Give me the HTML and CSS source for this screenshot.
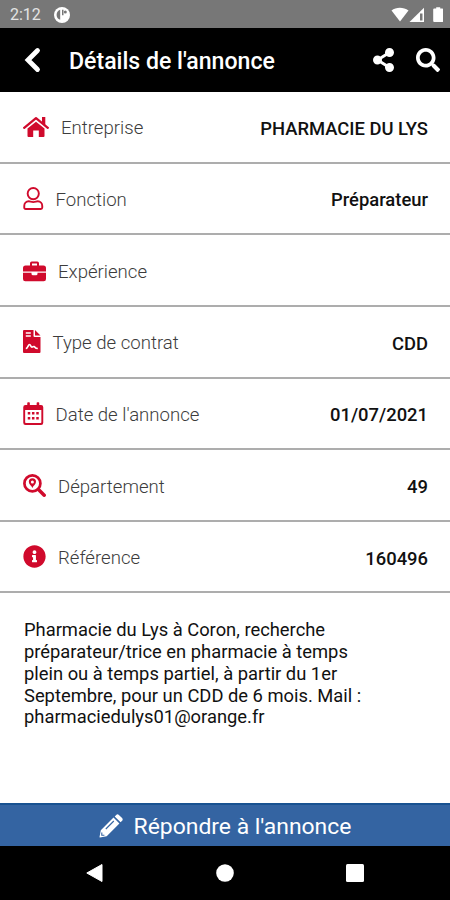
FILE: index.html
```html
<!DOCTYPE html>
<html lang="fr">
<head>
    <meta charset="UTF-8">
    <meta name="viewport" content="width=device-width, initial-scale=1.0">
    <title>Détails de l'annonce</title>
    <link rel="stylesheet" href="styles.css">
</head>
<body>
    <div class="status-bar">
        <span class="clock">2:12</span>
        <svg class="app-icon" viewBox="0 0 16 16">
            <circle cx="8" cy="8" r="8" fill="#fff"/>
            <path d="M6.200 2.800v10C3.800 12 2.600 10.300 2.600 8s1.200-4.300 3.600-5.200z" fill="#777"/>
            <path d="M8 2.800h1.500v5.500H8z" fill="#777"/>
            <circle cx="11.300" cy="5" r="1.500" fill="#777"/>
        </svg>
        <svg class="signals" viewBox="0 0 52 16">
            <path d="M.5 3.600C5 -.2 12.500 -.2 17.500 3.600L9 14.500z" fill="#fff"/>
            <path d="M33 .8V15H18.500z" fill="#fff"/>
            <path d="M29 6.500h2.500v7H29z" fill="#777"/>
            <path d="M43.200 1.500h2V.2h4v1.300h2q1 0 1 1V14q0 1-1 1h-8q-1 0-1-1V2.500q0-1 1-1z" fill="#fff"/>
        </svg>
    </div>

    <div class="header">
        <svg class="back" viewBox="0 0 17 26">
            <path d="M13.500 3.500L4 13l9.500 9.500" fill="none" stroke="#fff" stroke-width="4.800" stroke-linecap="round" stroke-linejoin="miter"/>
        </svg>
        <h1>Détails de l'annonce</h1>
        <svg class="share" viewBox="0 0 448 512">
            <path fill="#fff" d="M352 320c-22.608 0-43.387 7.819-59.790 20.895l-102.486-64.054a96.551 96.551 0 0 0 0-41.683l102.486-64.054C308.613 184.181 329.392 192 352 192c53.019 0 96-42.981 96-96S405.019 0 352 0s-96 42.981-96 96c0 7.158.790 14.130 2.276 20.841L155.790 180.895C139.387 167.819 118.608 160 96 160c-53.019 0-96 42.981-96 96s42.981 96 96 96c22.608 0 43.387-7.819 59.790-20.895l102.486 64.054A96.301 96.301 0 0 0 256 416c0 53.019 42.981 96 96 96s96-42.981 96-96-42.981-96-96-96z"/>
        </svg>
        <svg class="search" viewBox="0 0 512 512">
            <path fill="#fff" d="M505 442.700L405.300 343c-4.500-4.500-10.600-7-17-7H372c27.600-35.300 44-79.700 44-128C416 93.100 322.900 0 208 0S0 93.100 0 208s93.100 208 208 208c48.300 0 92.700-16.400 128-44v16.300c0 6.400 2.500 12.500 7 17l99.700 99.700c9.400 9.400 24.600 9.400 33.900 0l28.300-28.300c9.400-9.400 9.400-24.600.1-34zM208 336c-70.700 0-128-57.200-128-128 0-70.700 57.200-128 128-128 70.700 0 128 57.200 128 128 0 70.700-57.200 128-128 128z"/>
        </svg>
    </div>

    <div class="row">
        <svg class="icon home" viewBox="0 0 26 23">
            <path d="M1.200 12.800L13 3.200l11.800 9.600" fill="none" stroke="#d00a2c" stroke-width="2.300" stroke-linecap="round" stroke-linejoin="round"/>
            <path d="M19 2h3.300v8L19 7.200zM4.500 13.600L13 6.700l8.500 6.900V21q0 1-1 1h-4.700v-6.500h-5.600V22H5.500q-1 0-1-1z"/>
        </svg>
        <span class="label">Entreprise</span>
        <span class="value">PHARMACIE DU LYS</span>
    </div>
    <div class="row">
        <svg class="icon narrow" viewBox="0 0 20 23">
            <g fill="none" stroke="#d00a2c" stroke-width="1.900">
                <circle cx="10" cy="6.600" r="5.600"/>
                <path d="M5.500 14.300c1.500 0 2.400.8 4.500.8s3-.8 4.500-.8c2.600 0 4.500 2 4.500 4.600v1.600q0 1.500-1.500 1.500h-15Q1 22 1 20.500v-1.600c0-2.600 1.900-4.600 4.500-4.600z"/>
            </g>
        </svg>
        <span class="label">Fonction</span>
        <span class="value">Préparateur</span>
    </div>
    <div class="row">
        <svg class="icon" viewBox="0 0 23 23">
            <path d="M7 6.500V4.200q0-1.700 1.700-1.700h5.600q1.700 0 1.700 1.700v2.300h4.500q2.500 0 2.500 2.500v3.500H0V9q0-2.500 2.500-2.500zm2 0h5V4.500H9zM0 13.700h8.500v1q0 1.500 1.500 1.500h3q1.500 0 1.500-1.500v-1H23V20q0 2.300-2.300 2.300H2.300Q0 22.300 0 20z"/>
        </svg>
        <span class="label">Expérience</span>
        <span class="value"></span>
    </div>
    <div class="row">
        <svg class="icon contract" viewBox="0 0 17.500 23">
            <path d="M1 0h9.500v6q0 1.100 1.100 1.100h5.900V22q0 1-1 1H1q-1 0-1-1V1q0-1 1-1zM12 0l5.500 5.500H12z"/>
            <path d="M2.800 3h5M2.800 6h5" stroke="#fff" stroke-width="1.400"/>
            <path d="M2.800 18.500c2.200 0 2.300-4 3.700-4 1.200 0 1.200 2.600 2.400 2.600s1.200-.8 2.200-.6.800 2 3.700 2" fill="none" stroke="#fff" stroke-width="1.700"/>
        </svg>
        <span class="label">Type de contrat</span>
        <span class="value">CDD</span>
    </div>
    <div class="row">
        <svg class="icon narrow" viewBox="0 0 20 23">
            <path d="M4 3V1q0-.8.8-.8h1q.8 0 .8.800v2h6.800V1q0-.8.800-.8h1q.8 0 .8.800v2h1.800Q20 3 20 5.200v15.600q0 2.200-2.200 2.200H2.200Q0 23 0 20.800V5.200Q0 3 2.200 3zM1.900 8v12.300q0 .8.800.8h14.600q.8 0 .8-.8V8z"/>
            <path d="M4.500 10h2.500v2.500H4.500zm4.200 0h2.500v2.500H8.700zm4.300 0h2.500v2.500H13zM4.500 15h2.500v2.500H4.500zm4.200 0h2.500v2.500H8.700zm4.300 0h2.500v2.500H13z"/>
        </svg>
        <span class="label">Date de l'annonce</span>
        <span class="value">01/07/2021</span>
    </div>
    <div class="row">
        <svg class="icon" viewBox="0 0 23 23">
            <circle cx="9.400" cy="9.400" r="8" fill="none" stroke="#d00a2c" stroke-width="2.700"/>
            <path d="M15.500 15.500l5.700 5.700" stroke="#d00a2c" stroke-width="3.500" stroke-linecap="round"/>
            <path d="M9.400 4.200a3.600 3.600 0 0 1 3.600 3.600c0 2.500-2.600 3.800-3.600 6.200-1-2.400-3.600-3.700-3.600-6.200a3.600 3.600 0 0 1 3.600-3.600z"/>
            <circle cx="9.400" cy="7.900" r="1.500" fill="#fff"/>
        </svg>
        <span class="label">Département</span>
        <span class="value">49</span>
    </div>
    <div class="row">
        <svg class="icon" viewBox="0 0 512 512">
            <path d="M256 8C119.043 8 8 119.083 8 256c0 136.997 111.043 248 248 248s248-111.003 248-248C504 119.083 392.957 8 256 8zm0 110c23.196 0 42 18.804 42 42s-18.804 42-42 42-42-18.804-42-42 18.804-42 42-42zm56 254c0 6.627-5.373 12-12 12h-88c-6.627 0-12-5.373-12-12v-24c0-6.627 5.373-12 12-12h12v-64h-12c-6.627 0-12-5.373-12-12v-24c0-6.627 5.373-12 12-12h64c6.627 0 12 5.373 12 12v100h12c6.627 0 12 5.373 12 12v24z"/>
        </svg>
        <span class="label">Référence</span>
        <span class="value">160496</span>
    </div>

    <p class="description">
        Pharmacie du Lys à Coron, recherche<br>
        préparateur/trice en pharmacie à temps<br>
        plein ou à temps partiel, à partir du 1er<br>
        Septembre, pour un CDD de 6 mois. Mail :<br>
        pharmaciedulys01@orange.fr
    </p>

    <div class="reply">
        <svg class="pencil" viewBox="0 0 24 24">
            <path fill="#fff" d="M1.800 16.300L14.500 3.600l5.900 5.900L7.700 22.200.9 23.400q-.5 0-.4-.5zM15.700 2.400l1.500-1.500q1.300-1.200 2.700 0l3.200 3.200q1.200 1.400 0 2.700l-1.500 1.500z"/>
            <path d="M6.800 15l8-8M2.800 18.500v2.700h2.600" fill="none" stroke="#3464a2" stroke-width="1.100"/>
        </svg>
        <span>Répondre à l'annonce</span>
    </div>

    <div class="nav-bar">
        <svg viewBox="0 0 20 20"><path d="M1.800 10L17 1.500v17z" fill="#fff" stroke="#fff" stroke-linejoin="round"/></svg>
        <svg viewBox="0 0 20 20"><circle cx="10" cy="10" r="8.800" fill="#fff"/></svg>
        <svg viewBox="0 0 20 20"><rect x="1" y="1" width="18" height="18" rx="1.500" fill="#fff"/></svg>
    </div>
</body>
</html>
```

FILE: styles.css
```css
* {
    box-sizing: border-box;
}

body {
    display: flex;
    flex-direction: column;
    width: 450px;
    height: 900px;
    margin: 0;
    font-family: Roboto, sans-serif;
    background-color: #fff;
    color: #111;
}

.status-bar {
    display: flex;
    align-items: center;
    height: 28px;
    padding: 1px 7px 0 10px;
    background-color: #777;
    color: #e4e4e4;
}

.clock {
    width: 44px;
    font-size: 16px;
}

.app-icon {
    width: 16px;
    height: 16px;
}

.signals {
    width: 52px;
    height: 16px;
    margin-left: auto;
}

.header {
    display: flex;
    align-items: center;
    height: 64px;
    padding: 0 10px 0 24px;
    background-color: #000;
    color: #fff;
}

.back {
    width: 17px;
    height: 26px;
}

h1 {
    flex: 1;
    margin: 2px 0 0 28px;
    font-size: 23.1px;
    font-weight: 500;
}

.share {
    width: 21px;
    height: 24px;
    margin-right: 22px;
}

.search {
    width: 24px;
    height: 24px;
}

.row {
    display: flex;
    align-items: center;
    height: 71.65px;
    padding: 0 22px 0 23px;
    border-bottom: 2px solid #adadad;
}

.icon {
    width: 23px;
    height: 23px;
    margin-right: 12px;
    fill: #d00a2c;
}

.home {
    width: 26px;
}

.narrow {
    width: 20.5px;
}

.contract {
    width: 17.5px;
}

.label {
    padding-top: 3px;
    font-size: 18.6px;
    font-weight: 300;
    color: #3c3c3c;
}

.value {
    margin-left: auto;
    padding-top: 3px;
    font-size: 18.4px;
    font-weight: 500;
}

.description {
    margin: 26px 24px 0;
    font-size: 18.35px;
    line-height: 21.7px;
    white-space: nowrap;
}

.reply {
    display: flex;
    align-items: center;
    justify-content: center;
    height: 43px;
    margin-top: auto;
    background-color: #3464a2;
    border-top: 2px solid #195291;
    color: #fff;
    font-size: 22.9px;
}

.reply span {
    padding-top: 1px;
}

.pencil {
    width: 24px;
    height: 24px;
    margin-right: 11px;
}

.nav-bar {
    display: flex;
    align-items: center;
    justify-content: center;
    gap: 110px;
    height: 54px;
    background-color: #000;
}

.nav-bar svg {
    width: 20px;
    height: 20px;
}
```
